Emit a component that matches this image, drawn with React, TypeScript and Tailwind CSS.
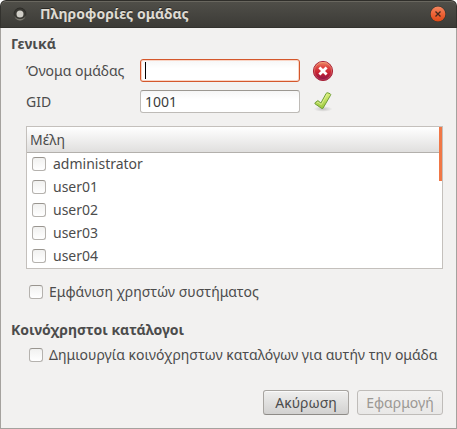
import { useState } from "react";

const members = ["administrator", "user01", "user02", "user03", "user04"];

const checkboxClass =
  "size-3.5 shrink-0 appearance-none rounded-[3px] border border-[#b5b2ae] border-t-[#99958f] bg-linear-to-b from-[#f1f1f0] to-white checked:bg-[#f07746]";

const fieldClass =
  "block h-[23px] w-full rounded-[3px] border px-1 text-sm leading-5 text-[#3c3c3c] outline-none bg-linear-to-b from-[#f6f6f6] to-white to-40%";

function MenuDot() {
  return (
    <svg width="14" height="14" viewBox="0 0 14 14" aria-hidden="true">
      <defs>
        <linearGradient id="ring" x1="0" y1="0" x2="0" y2="1">
          <stop offset="0" stopColor="#292824" />
          <stop offset="0.6" stopColor="#35342f" />
          <stop offset="1" stopColor="#8b897f" />
        </linearGradient>
      </defs>
      <circle cx="7" cy="7" r="6.4" fill="url(#ring)" />
      <circle cx="7" cy="6.6" r="5.4" fill="#393833" />
      <circle cx="7" cy="7" r="3.5" fill="#d0cec7" />
    </svg>
  );
}

function CloseIcon() {
  return (
    <svg width="16" height="16" viewBox="0 0 16 16" aria-hidden="true">
      <defs>
        <linearGradient id="close" x1="0" y1="0" x2="0" y2="1">
          <stop offset="0" stopColor="#f48760" />
          <stop offset="0.5" stopColor="#ee6337" />
          <stop offset="1" stopColor="#e04a17" />
        </linearGradient>
      </defs>
      <circle cx="8" cy="8" r="7.9" fill="#343029" />
      <circle cx="8" cy="8" r="7.4" fill="url(#close)" />
      <path d="M5.5 5.5l5 5M10.5 5.5l-5 5" stroke="#43281c" strokeWidth="1.3" />
    </svg>
  );
}

function ErrorIcon() {
  return (
    <svg width="22" height="22" viewBox="0 0 22 22" role="img" aria-label="Σφάλμα">
      <defs>
        <linearGradient id="error" x1="0" y1="0" x2="0" y2="1">
          <stop offset="0" stopColor="#ed9168" />
          <stop offset="0.3" stopColor="#df4642" />
          <stop offset="0.6" stopColor="#c72031" />
          <stop offset="1" stopColor="#84154d" />
        </linearGradient>
        <linearGradient id="errorRim" x1="0" y1="0" x2="0" y2="1">
          <stop offset="0" stopColor="#f2a37c" />
          <stop offset="1" stopColor="#b63557" />
        </linearGradient>
      </defs>
      <circle cx="11" cy="11" r="9.6" fill="url(#error)" stroke="#aa263a" />
      <circle cx="11" cy="11" r="8.6" fill="none" stroke="url(#errorRim)" strokeWidth="0.8" />
      <path d="M7.4 7.4l7.2 7.2M14.6 7.4l-7.2 7.2" stroke="#fff" strokeWidth="2.8" />
    </svg>
  );
}

function OkIcon() {
  return (
    <svg width="22" height="22" viewBox="0 0 22 22" role="img" aria-label="Έγκυρο">
      <defs>
        <linearGradient id="ok" x1="0" y1="0" x2="0" y2="1">
          <stop offset="0" stopColor="#dcf07c" />
          <stop offset="1" stopColor="#9cc83e" />
        </linearGradient>
        <radialGradient id="okShadow">
          <stop offset="0" stopColor="#000" stopOpacity="0.2" />
          <stop offset="1" stopColor="#000" stopOpacity="0" />
        </radialGradient>
      </defs>
      <ellipse cx="11" cy="18" rx="9.5" ry="2.8" fill="url(#okShadow)" />
      <path
        d="M3.1 11.7L5.9 9.6 8.9 12 14.2 2.4Q14.8 1.5 15.8 1.8L18.2 2.8Q19.1 3.3 18.5 4.3L10.9 17.4 9.8 17.5 3.1 12.9Q2.5 12.3 3.1 11.7Z"
        fill="url(#ok)"
        stroke="#6f9e3a"
        strokeLinejoin="round"
      />
      <path d="M4.6 12.2l1.3-1 3.4 2.4 5.8-10.4" fill="none" stroke="#e5f4a2" strokeWidth="0.7" />
    </svg>
  );
}

export default function App() {
  const [name, setName] = useState("");
  const [gid, setGid] = useState("1001");

  return (
    <div className="bg-white font-['Noto_Sans',sans-serif] text-sm leading-5 text-[#4c4c4c]">
      <header className="flex h-7 items-center rounded-t-md border border-[#33322e] border-t-[#2f2e2a] bg-linear-to-b from-[#504f49] to-[#3c3b37] pr-2.5 pl-3 shadow-[inset_0_1px_0_#69675f]">
        <MenuDot />
        <h1 className="ml-[13px] flex-1 font-bold text-[#dfdbd2] [text-shadow:0_-1px_0_#2a2925]">
          Πληροφορίες ομάδας
        </h1>
        <button type="button" aria-label="Κλείσιμο">
          <CloseIcon />
        </button>
      </header>

      <main className="border border-t-0 border-[#a5a29e] bg-[#f2f1f0] pt-1.5 pr-[13px] pb-[13px] pl-2.5">
        <h2 className="font-bold">Γενικά</h2>
        <div className="mt-[5px] ml-[15px] grid grid-cols-[102px_160px_22px] items-center gap-x-3 gap-y-2">
          <label htmlFor="name">Όνομα ομάδας</label>
          <div className="relative">
            <input
              id="name"
              value={name}
              onChange={(e) => setName(e.target.value)}
              className={`${fieldClass} border-[#d4572b] shadow-[inset_0_0_0_1px_#f9d4c5]`}
            />
            <span className="pointer-events-none absolute top-[3px] left-[5px] h-[17px] w-px bg-black" />
          </div>
          <ErrorIcon />
          <label htmlFor="gid">GID</label>
          <input
            id="gid"
            value={gid}
            onChange={(e) => setGid(e.target.value)}
            className={`${fieldClass} border-[#bebbb7] border-t-[#9c9892]`}
          />
          <OkIcon />
        </div>

        <div className="relative mt-[13px] ml-[15px] border border-[#c4c0bc] bg-white">
          <table className="w-full border-separate border-spacing-0">
            <thead>
              <tr>
                <th className="h-[26px] border-b border-[#b3b0ac] bg-linear-to-b from-white to-[#e0dfde] px-[3px] py-0 text-left font-normal">
                  Μέλη
                </th>
              </tr>
            </thead>
            <tbody>
              {members.map((member) => (
                <tr key={member}>
                  <td className="h-[23px] px-[5px] py-0 align-top">
                    <label className="flex h-[22px] items-center gap-[7px]">
                      <input type="checkbox" className={checkboxClass} />
                      {member}
                    </label>
                  </td>
                </tr>
              ))}
            </tbody>
          </table>
          <div className="absolute top-0 right-0 h-[54px] w-[3px] bg-[#f07746]" />
        </div>

        <label className="mt-[13px] ml-[18px] flex items-center gap-1.5">
          <input type="checkbox" className={checkboxClass} />
          Εμφάνιση χρηστών συστήματος
        </label>

        <h2 className="mt-[18px] font-bold">Κοινόχρηστοι κατάλογοι</h2>
        <label className="mt-[5px] ml-[18px] flex items-center gap-1.5 whitespace-nowrap">
          <input type="checkbox" className={checkboxClass} />
          Δημιουργία κοινόχρηστων καταλόγων για αυτήν την ομάδα
        </label>

        <div className="mt-[25px] flex justify-end gap-2">
          <button
            type="button"
            className="h-[25px] w-[86px] rounded-[3px] border border-[#a7a4a0] border-b-[#8e8b87] bg-linear-to-b from-[#efefee] to-[#d2d1d0] shadow-[inset_0_1px_0_#fafafa]"
          >
            Ακύρωση
          </button>
          <button
            type="button"
            disabled
            className="h-[25px] w-[86px] rounded-[3px] border border-[#bfbcb9] bg-linear-to-b from-[#f2f1f0] to-[#e9e8e7] text-[#9b9894]"
          >
            Εφαρμογή
          </button>
        </div>
      </main>
    </div>
  );
}
